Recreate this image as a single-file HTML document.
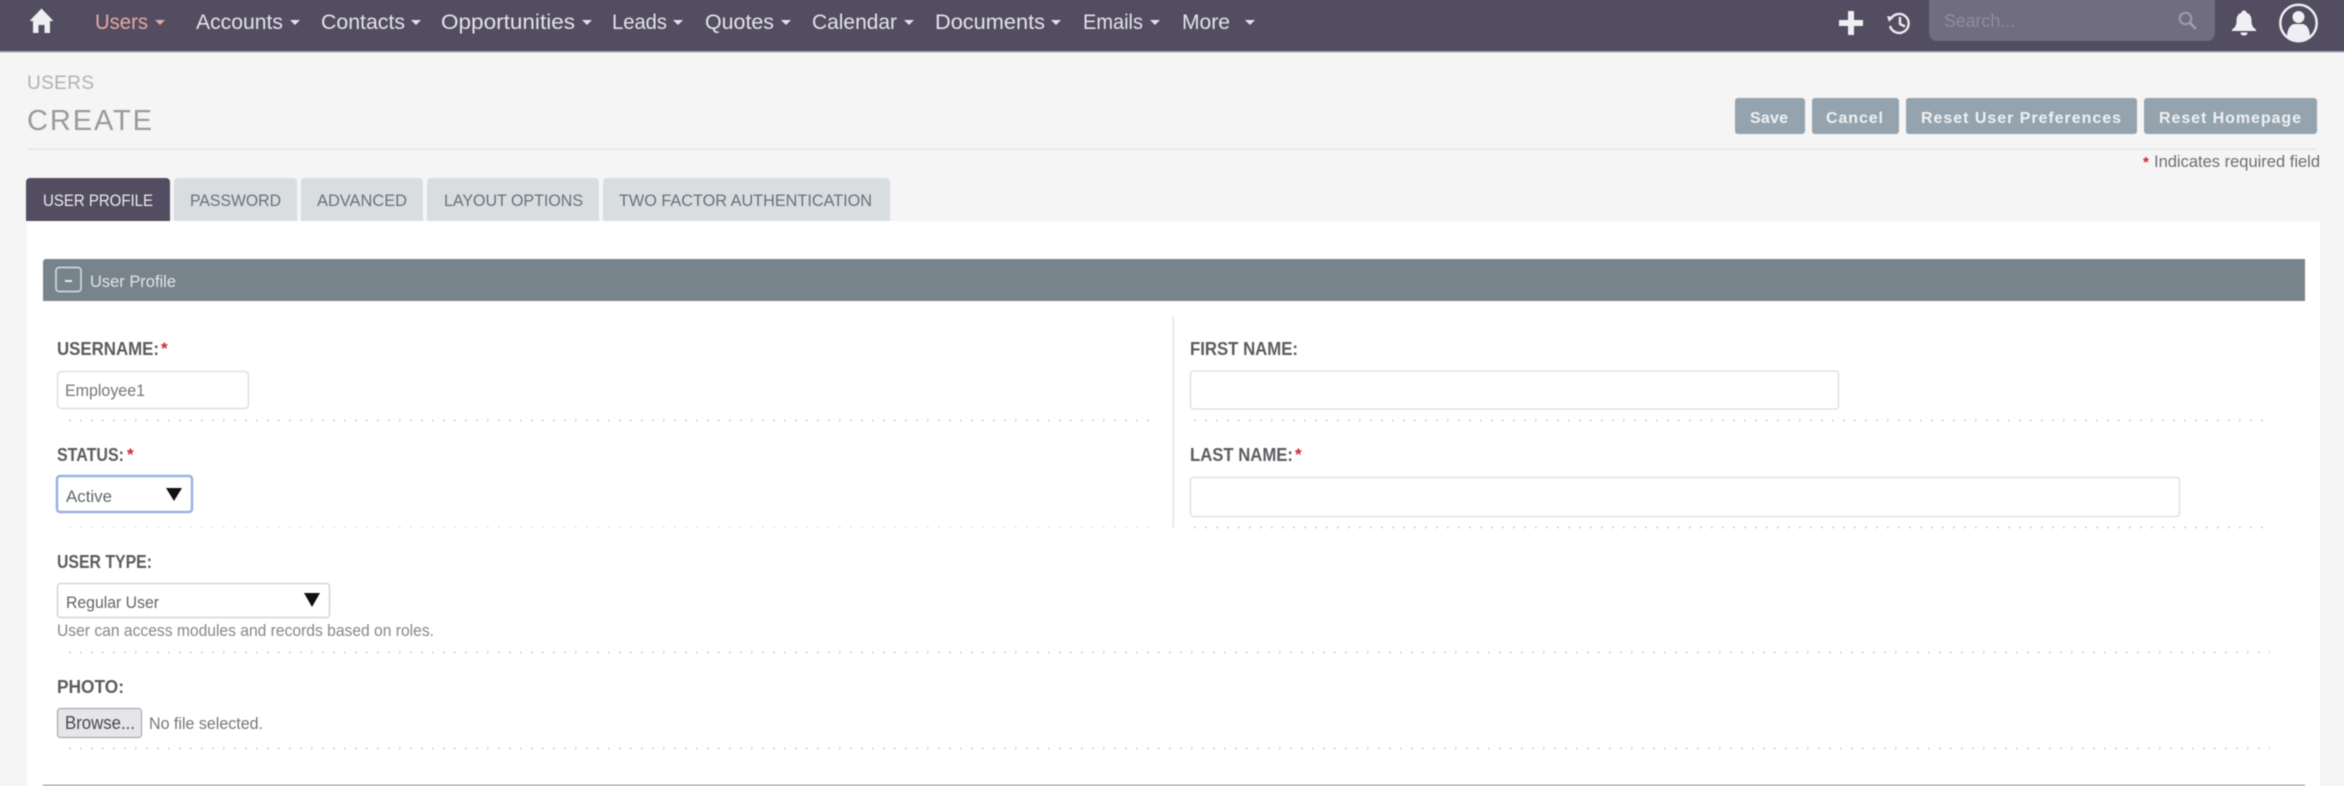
<!DOCTYPE html>
<html><head><meta charset="utf-8"><title>Users - Create</title>
<style>
html,body{margin:0;padding:0;width:2344px;height:786px;overflow:hidden;background:#f5f5f5}
#w{position:relative;width:2344px;height:786px;overflow:hidden;contain:paint}
svg{position:absolute;left:-10px;top:-10px;display:block;filter:blur(.55px)}
text{font-family:"Liberation Sans",sans-serif}
.n{font-size:21px;fill:#e4e2ea}
.b{font-size:16px;font-weight:bold;fill:#eef1f3}
.t{font-size:17px;fill:#697177}
.l{font-size:18px;font-weight:bold;fill:#5a5c60}
.v{font-size:17px;fill:#75777b}
.s{font-size:17px;font-weight:bold;fill:#d8232f}
.d{stroke:#c4c4c4;stroke-width:1.6;stroke-dasharray:1.6 9.4;fill:none}
</style></head><body>
<div id="w">
<svg width="2364" height="806" viewBox="-10 -10 2364 806" xmlns="http://www.w3.org/2000/svg">
<rect x="-10" y="-10" width="2364" height="806" fill="#f5f5f5"/>
<rect x="-10" y="-10" width="2364" height="61" fill="#524d60"/>
<rect x="-10" y="51" width="2364" height="1.500" fill="#a9a6b5"/>
<path d="M41.500 8.500 L53.500 21 L50 21 L50 33 L44.500 33 L44.500 25 L38.500 25 L38.500 33 L33 33 L33 21 L29.500 21 Z" fill="#eeedf1"/>
<text x="95" y="29" class="n" style="fill:#e3a9a3" textLength="53" lengthAdjust="spacingAndGlyphs">Users</text>
<text x="196" y="29" class="n" textLength="87" lengthAdjust="spacingAndGlyphs">Accounts</text>
<text x="321" y="29" class="n" textLength="84" lengthAdjust="spacingAndGlyphs">Contacts</text>
<text x="441" y="29" class="n" textLength="134" lengthAdjust="spacingAndGlyphs">Opportunities</text>
<text x="612" y="29" class="n" textLength="55" lengthAdjust="spacingAndGlyphs">Leads</text>
<text x="705" y="29" class="n" textLength="69" lengthAdjust="spacingAndGlyphs">Quotes</text>
<text x="812" y="29" class="n" textLength="85" lengthAdjust="spacingAndGlyphs">Calendar</text>
<text x="935" y="29" class="n" textLength="110" lengthAdjust="spacingAndGlyphs">Documents</text>
<text x="1083" y="29" class="n" textLength="60" lengthAdjust="spacingAndGlyphs">Emails</text>
<text x="1182" y="29" class="n" textLength="48" lengthAdjust="spacingAndGlyphs">More</text>
<g fill="#e4e2ea">
<path d="M155 20h10l-5 5z" fill="#e3a9a3"/>
<path d="M290 20h10l-5 5z"/><path d="M411 20h10l-5 5z"/><path d="M582 20h10l-5 5z"/>
<path d="M673 20h10l-5 5z"/><path d="M781 20h10l-5 5z"/><path d="M904 20h10l-5 5z"/>
<path d="M1051 20h10l-5 5z"/><path d="M1150 20h10l-5 5z"/><path d="M1245 20h10l-5 5z"/>
</g>
<path d="M1848 11h6v9h9v6h-9v9h-6v-9h-9v-6h9z" fill="#f0eff3"/>
<g fill="none" stroke="#eceaf0" stroke-width="2.400">
<path d="M1890.500 19.500 A9.500 9.500 0 1 1 1890 26"/>
<path d="M1900 17v7l5 2.500"/>
</g>
<path d="M1887 16l6 1-4 5z" fill="#eceaf0"/>
<rect x="1929" y="-16" width="286" height="57" rx="8" fill="#716d80"/>
<text x="1944" y="27" font-size="18" fill="#8f8c9c" textLength="71" lengthAdjust="spacingAndGlyphs">Search...</text>
<circle cx="2185.500" cy="18.500" r="5.800" fill="none" stroke="#a09dac" stroke-width="2"/>
<path d="M2190 23l6 6" stroke="#a09dac" stroke-width="2.600"/>
<path d="M2244 10.500c1.500 0 2.500 1 2.500 2.300 4 1.200 5 4.500 5 8.200 0 4.500 1.500 6.500 4.500 8.500v1.500h-24v-1.500c3-2 4.500-4 4.500-8.500 0-3.700 1-7 5-8.200 0-1.300 1-2.300 2.500-2.300z" fill="#f0eff3"/>
<path d="M2240.500 32.500h7c0 2-1.500 3-3.500 3s-3.500-1-3.500-3z" fill="#f0eff3"/>
<circle cx="2298.500" cy="23" r="18.200" fill="none" stroke="#efeef2" stroke-width="2.500"/>
<circle cx="2298.500" cy="17" r="6" fill="#efeef2"/>
<path d="M2287 38c0-9 3-13 7-14h9c4 1 7 5 7 14c-3 2.500-7 3.500-11.500 3.500s-8.500-1-11.500-3.500z" fill="#efeef2"/>

<text x="27" y="89" font-size="19" fill="#b2b2b2" textLength="67">USERS</text>
<text x="27" y="130" font-size="29" fill="#9a9a9a" textLength="125">CREATE</text>
<rect x="27" y="148.500" width="2290" height="1.500" fill="#e8e8e8"/>

<g fill="#95a3ae">
<rect x="1735" y="98" width="70" height="36" rx="3"/>
<rect x="1812" y="98" width="87" height="36" rx="3"/>
<rect x="1906" y="98" width="231" height="36" rx="3"/>
<rect x="2144" y="98" width="173" height="36" rx="3"/>
</g>
<text x="1750" y="123" class="b" textLength="38">Save</text>
<text x="1826" y="123" class="b" textLength="57">Cancel</text>
<text x="1921" y="123" class="b" textLength="200">Reset User Preferences</text>
<text x="2159" y="123" class="b" textLength="142">Reset Homepage</text>
<text x="2143" y="167" class="s" style="font-size:15px">*</text>
<text x="2154" y="167" font-size="17" fill="#6d6f73" textLength="166" lengthAdjust="spacingAndGlyphs">Indicates required field</text>

<rect x="27" y="221" width="2293" height="575" fill="#ffffff"/>
<path d="M26 221v-39a4 4 0 0 1 4-4h136a4 4 0 0 1 4 4v39z" fill="#524d60"/>
<g fill="#d8dde0">
<path d="M174 221v-39a4 4 0 0 1 4-4h115a4 4 0 0 1 4 4v39z"/>
<path d="M301 221v-39a4 4 0 0 1 4-4h114a4 4 0 0 1 4 4v39z"/>
<path d="M427 221v-39a4 4 0 0 1 4-4h164a4 4 0 0 1 4 4v39z"/>
<path d="M603 221v-39a4 4 0 0 1 4-4h279a4 4 0 0 1 4 4v39z"/>
</g>
<text x="43" y="206" class="t" style="fill:#ebeaf0" textLength="110" lengthAdjust="spacingAndGlyphs">USER PROFILE</text>
<text x="190" y="206" class="t" textLength="91" lengthAdjust="spacingAndGlyphs">PASSWORD</text>
<text x="317" y="206" class="t" textLength="90" lengthAdjust="spacingAndGlyphs">ADVANCED</text>
<text x="444" y="206" class="t" textLength="139" lengthAdjust="spacingAndGlyphs">LAYOUT OPTIONS</text>
<text x="619" y="206" class="t" textLength="253" lengthAdjust="spacingAndGlyphs">TWO FACTOR AUTHENTICATION</text>

<path d="M43 301v-39a3 3 0 0 1 3-3h2259v42z" fill="#78848c"/>
<rect x="56" y="267.500" width="25" height="24" rx="3" fill="none" stroke="#d9dfe3" stroke-width="1.500"/>
<rect x="65" y="280" width="7" height="2" fill="#e4e8ea"/>
<text x="90" y="287" font-size="17" fill="#dfe4e7" textLength="86" lengthAdjust="spacingAndGlyphs">User Profile</text>

<rect x="1172.500" y="316" width="1.500" height="212" fill="#e6e6e6"/>

<text x="57" y="355" class="l" textLength="102" lengthAdjust="spacingAndGlyphs">USERNAME:</text>
<text x="161" y="354" class="s">*</text>
<rect x="57.500" y="371.500" width="191" height="37" rx="4" fill="#fff" stroke="#dfe1e3" stroke-width="1.500"/>
<text x="65" y="396" class="v" textLength="80" lengthAdjust="spacingAndGlyphs">Employee1</text>

<text x="1190" y="355" class="l" textLength="108" lengthAdjust="spacingAndGlyphs">FIRST NAME:</text>
<rect x="1190.500" y="371" width="648" height="38" rx="3" fill="#fff" stroke="#dfe1e3" stroke-width="1.500"/>

<path class="d" d="M69 420.500H1152"/>
<path class="d" d="M1194 420.500H2270"/>

<text x="57" y="461" class="l" textLength="67" lengthAdjust="spacingAndGlyphs">STATUS:</text>
<text x="127" y="460" class="s">*</text>
<rect x="57" y="476" width="135" height="36" rx="3" fill="#fff" stroke="#9ab2e2" stroke-width="2.500"/>
<text x="66" y="502" font-size="17" fill="#63656a" textLength="46" lengthAdjust="spacingAndGlyphs">Active</text>
<path d="M166 488h16l-8 13z" fill="#111"/>

<text x="1190" y="461" class="l" textLength="103" lengthAdjust="spacingAndGlyphs">LAST NAME:</text>
<text x="1295" y="460" class="s">*</text>
<rect x="1190.500" y="477.500" width="989" height="39" rx="3" fill="#fff" stroke="#dfe1e3" stroke-width="1.500"/>

<path class="d" d="M69 527.500H1152" style="stroke:#e0e0e0"/>
<path class="d" d="M1194 527.500H2270"/>

<text x="57" y="568" class="l" textLength="95" lengthAdjust="spacingAndGlyphs">USER TYPE:</text>
<rect x="57.500" y="583.500" width="272" height="34" rx="3" fill="#fff" stroke="#d5d6d8" stroke-width="1.500"/>
<text x="66" y="608" font-size="17" fill="#63656a" textLength="93" lengthAdjust="spacingAndGlyphs">Regular User</text>
<path d="M304 593h16l-8 14z" fill="#111"/>
<text x="57" y="636" font-size="17" fill="#85878b" textLength="377" lengthAdjust="spacingAndGlyphs">User can access modules and records based on roles.</text>
<path class="d" d="M69 652.500H2270"/>

<text x="57" y="693" class="l" textLength="67" lengthAdjust="spacingAndGlyphs">PHOTO:</text>
<rect x="57.500" y="708.500" width="84" height="29" rx="3" fill="#e6e6ea" stroke="#a9abae" stroke-width="1.200"/>
<text x="65" y="729" font-size="18" fill="#47494d" textLength="70" lengthAdjust="spacingAndGlyphs">Browse...</text>
<text x="149" y="729" font-size="17" fill="#75777b" textLength="114" lengthAdjust="spacingAndGlyphs">No file selected.</text>
<path class="d" d="M69 748.500H2270"/>
<rect x="43" y="784.500" width="2262" height="1.500" fill="#a3acb2"/>
</svg>
</div>
</body></html>
